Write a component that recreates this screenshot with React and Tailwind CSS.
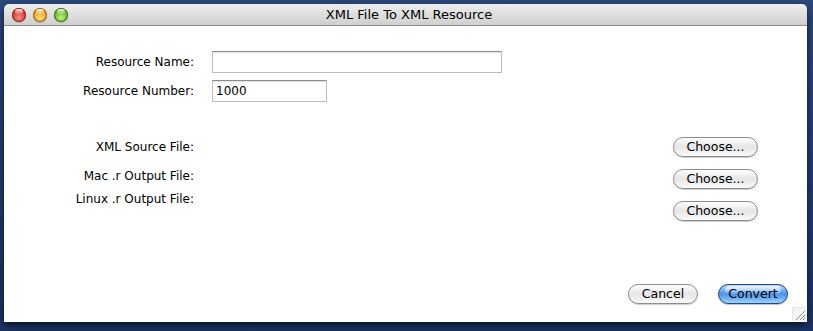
import React from "react";

function Light({ from, to, border }) {
  return (
    <div
      className="w-[14px] h-[14px] rounded-full relative"
      style={{
        background: `radial-gradient(circle at 50% 70%, ${from} 0%, ${to} 75%)`,
        boxShadow: `inset 0 0 0 1px ${border}, 0 1px 1px rgba(0,0,0,0.15)`,
      }}
    >
      <div className="absolute left-[3px] top-[1px] w-[8px] h-[5px] rounded-full bg-gradient-to-b from-white/90 to-white/10" />
    </div>
  );
}

function AquaButton({ children, w, primary }) {
  const base =
    "h-[20px] rounded-full flex items-center justify-center text-[12.5px] text-black relative overflow-hidden";
  return primary ? (
    <div
      className={`${base} border border-[#27487f] bg-gradient-to-b from-[#b7d6fb] via-[#4a93e8] to-[#9ad2ff] shadow-[0_1px_1px_rgba(0,0,0,0.25)]`}
      style={{ width: w }}
    >
      <div className="absolute left-[6px] right-[6px] top-[1px] h-[8px] rounded-full bg-gradient-to-b from-white/80 to-white/10" />
      <span className="relative">{children}</span>
    </div>
  ) : (
    <div
      className={`${base} border border-[#8d8d8d] bg-gradient-to-b from-[#fdfdfd] via-[#e6e6e6] to-[#fafafa] shadow-[0_1px_1px_rgba(0,0,0,0.2)]`}
      style={{ width: w }}
    >
      <span className="relative">{children}</span>
    </div>
  );
}

function Field({ w, value }) {
  return (
    <div
      className="h-[22px] bg-white border border-[#bdbdbd] border-t-[#8c8c8c] shadow-[inset_0_1px_1px_rgba(0,0,0,0.12)] flex items-center px-[3px] text-[12px] text-black"
      style={{ width: w }}
    >
      {value}
    </div>
  );
}

export default function App() {
  return (
    <div
      className="w-[813px] h-[331px] bg-gradient-to-b from-[#2c4a7e] to-[#1c3466] pt-[4px] pl-[4px]"
      style={{ fontFamily: '"DejaVu Sans", "Liberation Sans", sans-serif' }}
    >
      <div className="w-[803px] h-[318px] flex flex-col rounded-t-[5px] overflow-hidden shadow-[0_3px_8px_rgba(0,0,0,0.7)]">
        {/* Title bar */}
        <div className="h-[22px] relative flex items-center justify-center bg-gradient-to-b from-[#eeeeee] via-[#dedede] to-[#cfcfcf] border-b border-[#8f8f8f]">
          <div className="absolute left-[8px] top-[4px] flex gap-[7px]">
            <Light from="#ff8b80" to="#c8231a" border="#8b2b25" />
            <Light from="#ffe27a" to="#e0890c" border="#95661b" />
            <Light from="#c4f37a" to="#4f9e18" border="#3f7420" />
          </div>
          <span className="text-[13px] text-black pl-[7px] leading-none">XML File To XML Resource</span>
        </div>

        {/* Content */}
        <div className="flex-1 bg-white flex flex-col relative text-[12px] text-black">
          <div className="pt-[25px] flex flex-col gap-[7px]">
            <div className="flex items-center">
              <div className="w-[190px] text-right">Resource Name:</div>
              <div className="ml-[18px]">
                <Field w={290} value="" />
              </div>
            </div>
            <div className="flex items-center">
              <div className="w-[190px] text-right">Resource Number:</div>
              <div className="ml-[18px]">
                <Field w={115} value="1000" />
              </div>
            </div>
          </div>

          <div className="flex mt-[35px] pr-[49px]">
            <div className="w-[190px] text-right flex flex-col leading-[16px]">
              <div className="mt-[2px]">XML Source File:</div>
              <div className="mt-[13px]">Mac .r Output File:</div>
              <div className="mt-[7px]">Linux .r Output File:</div>
            </div>
            <div className="flex-1" />
            <div className="flex flex-col gap-[12px]">
              <AquaButton w={85}>Choose...</AquaButton>
              <AquaButton w={85}>Choose...</AquaButton>
              <AquaButton w={85}>Choose...</AquaButton>
            </div>
          </div>

          <div className="mt-auto flex justify-end gap-[20px] pr-[19px] pb-[18px]">
            <AquaButton w={70}>Cancel</AquaButton>
            <AquaButton w={70} primary>
              Convert
            </AquaButton>
          </div>

          <svg className="absolute right-[1px] bottom-[1px]" width="14" height="14" viewBox="0 0 14 14">
            <rect x="0" y="0" width="14" height="14" fill="#f4f4f4" />
            <path d="M0 0V14" stroke="#d6d6d6" />
            <path d="M0 0H14" stroke="#d6d6d6" />
            <path d="M13 4L4 13M13 8L8 13M13 11L11 13" stroke="#8a8a8a" strokeWidth="1" />
            <path d="M13 5L5 13M13 9L9 13" stroke="#ffffff" strokeWidth="1" />
          </svg>
        </div>
      </div>
    </div>
  );
}
